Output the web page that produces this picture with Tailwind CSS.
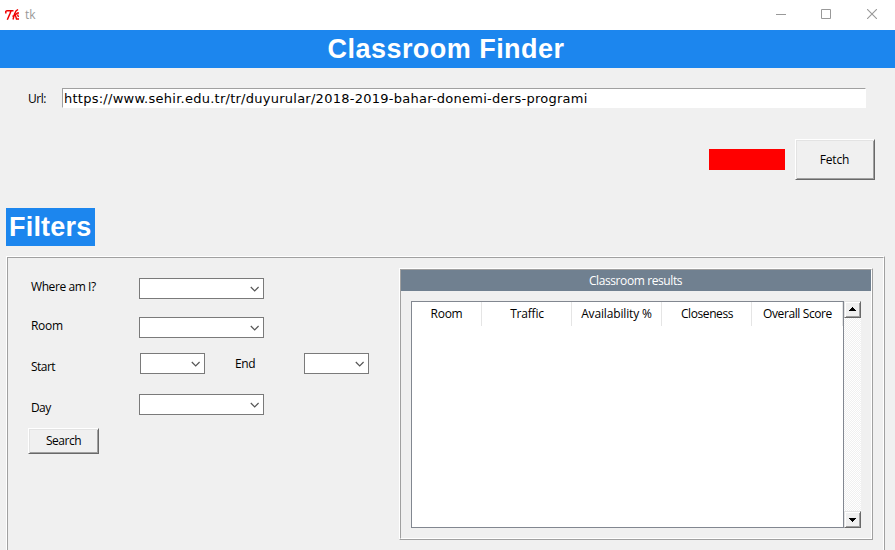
<!DOCTYPE html>
<html lang="en">
<head>
<meta charset="utf-8">
<title>tk</title>
<script src="https://cdn.jsdelivr.net/npm/@tailwindcss/browser@4"></script>
</head>
<body class="w-[895px] h-[550px] overflow-hidden bg-[#f0f0f0] font-['Open_Sans','Noto_Sans',sans-serif] text-[12px] leading-4 text-black whitespace-nowrap">
<div class="flex h-[550px] flex-col overflow-hidden">
  <header class="flex h-[30px] shrink-0 items-center bg-white text-[#999]">
    <svg class="ml-[5px] -mt-px" width="15" height="12" viewBox="0 0 15 12" fill="none" stroke="#f00000"><path d="M.8 4.500V2.500L2 1.700H8.500M6 2 4.800 5 3.500 8 2.300 10.800" stroke-width="1.500"/><path d="M13 .5 11 2 9.500 5 8 10.500M7.500 7.500 9.500 6.500 12.500 4H14M10.500 6.500 11.500 10H14M12.500 5.500 13.500 8" stroke-width="1.400"/></svg>
    <span class="ml-[5px]">tk</span>
    <div class="ml-auto mr-[18px] -mt-[2px] flex items-center">
      <svg class="mr-[35px]" width="10" height="10" viewBox="0 0 10 10" stroke="#999"><path d="M0 5.500h10"/></svg>
      <svg class="mr-9" width="10" height="10" viewBox="0 0 10 10" fill="none" stroke="#999"><path d="M.5.5h9v9h-9z"/></svg>
      <svg width="10" height="10" viewBox="0 0 10 10" stroke="#999" stroke-width="1.100"><path d="m0 0 10 10M10 0 0 10"/></svg>
    </div>
  </header>
  <h1 class="h-[38px] shrink-0 bg-[#1c86ee] pr-[3px] text-center font-['Liberation_Sans',Arial,sans-serif] text-[27px] leading-[38px] font-bold tracking-[0.46px] text-white">Classroom Finder</h1>

  <section class="flex h-[40px] shrink-0 pt-5">
    <label class="w-[62px] pl-[28px] pt-[3px] tracking-[-0.5px]">Url:</label>
    <div class="h-5 w-[804px] border border-t-[#a0a0a0] border-l-[#a0a0a0] border-r-white border-b-white bg-white pl-px font-['DejaVu_Sans',Verdana,sans-serif] text-[13px] leading-[19px] tracking-[0.255px]">https://www.sehir.edu.tr/tr/duyurular/2018-2019-bahar-donemi-ders-programi</div>
  </section>
  <section class="mt-[31px] mr-5 flex h-[41px] shrink-0 items-start justify-end gap-[10px]">
    <div class="mt-[10px] h-[21px] w-[76px] bg-[#ff0000]"></div>
    <button class="h-[41px] w-20 border border-t-white border-l-white border-r-[#696969] border-b-[#696969] pr-px tracking-[-0.2px] shadow-[inset_1px_1px_0_#e3e3e3,inset_-1px_-1px_0_#a0a0a0]">Fetch</button>
  </section>

  <h2 class="mt-7 ml-[6px] h-[38px] w-[89px] shrink-0 bg-[#1c86ee] pl-[3px] font-['Liberation_Sans',Arial,sans-serif] text-[27px] leading-[38px] font-bold tracking-[0.2px] text-white">Filters</h2>

  <main class="mt-[10px] ml-[6px] h-[310px] w-[879px] shrink-0 border border-t-white border-l-white border-r-[#a0a0a0] border-b-[#a0a0a0]">
    <div class="flex h-full border border-t-[#a0a0a0] border-l-[#a0a0a0] border-r-white border-b-white">
      <div class="w-[391px] shrink-0 pt-5">
        <div class="flex h-[39px]">
          <label class="w-[131px] pt-px pl-[23px] tracking-[-0.42px]">Where am I?</label>
          <div class="flex h-[21px] w-[125px] items-center justify-end border border-[#7a7a7a] bg-white pt-px pr-1"><svg width="9" height="6" viewBox="0 0 9 6" fill="none" stroke="#555" stroke-width="1.200"><path d="m.8 1 3.900 3.900L8.600 1"/></svg></div>
        </div>
        <div class="flex h-[36px]">
          <label class="w-[131px] pt-px pl-[23px] tracking-[-0.3px]">Room</label>
          <div class="flex h-[21px] w-[125px] items-center justify-end border border-[#7a7a7a] bg-white pt-px pr-1"><svg width="9" height="6" viewBox="0 0 9 6" fill="none" stroke="#555" stroke-width="1.200"><path d="m.8 1 3.900 3.900L8.600 1"/></svg></div>
        </div>
        <div class="flex h-[41px]">
          <label class="w-[132px] pt-[6px] pl-[23px] tracking-[-0.55px]">Start</label>
          <div class="flex h-[21px] w-[65px] items-center justify-end border border-[#7a7a7a] bg-white pt-px pr-1"><svg width="9" height="6" viewBox="0 0 9 6" fill="none" stroke="#555" stroke-width="1.200"><path d="m.8 1 3.900 3.900L8.600 1"/></svg></div>
          <label class="w-[99px] pt-[3px] pl-[30px] tracking-[-0.35px]">End</label>
          <div class="flex h-[21px] w-[65px] items-center justify-end border border-[#7a7a7a] bg-white pt-px pr-1"><svg width="9" height="6" viewBox="0 0 9 6" fill="none" stroke="#555" stroke-width="1.200"><path d="m.8 1 3.900 3.900L8.600 1"/></svg></div>
        </div>
        <div class="flex h-[34px]">
          <label class="w-[131px] pt-[6px] pl-[23px] tracking-[-0.6px]">Day</label>
          <div class="flex h-[21px] w-[125px] items-center justify-end border border-[#7a7a7a] bg-white pt-px pr-1"><svg width="9" height="6" viewBox="0 0 9 6" fill="none" stroke="#555" stroke-width="1.200"><path d="m.8 1 3.900 3.900L8.600 1"/></svg></div>
        </div>
        <button class="ml-5 block h-[26px] w-[71px] border border-t-white border-l-white border-r-[#696969] border-b-[#696969] leading-[24px] tracking-[-0.5px] shadow-[inset_1px_1px_0_#e3e3e3,inset_-1px_-1px_0_#a0a0a0]">Search</button>
      </div>

      <div class="mt-[10px] h-[272px] w-[474px] shrink-0 border border-t-white border-l-white border-r-[#a0a0a0] border-b-[#a0a0a0]">
        <div class="h-full border border-t-[#a0a0a0] border-l-[#a0a0a0] border-r-white border-b-white">
          <div class="h-[21px] bg-[#708090] pr-px text-center leading-[22px] tracking-[-0.4px] text-white">Classroom results</div>
          <div class="mt-[10px] ml-[10px] flex h-[227px]">
            <div class="w-[433px] border border-[#828790] bg-white">
              <div class="grid h-6 grid-cols-[70px_90px_90px_90px_91px] text-center leading-6">
                <div class="border-r border-[#e5e5e5] tracking-[-0.25px]">Room</div>
                <div class="border-r border-[#e5e5e5] pl-px tracking-[-0.2px]">Traffic</div>
                <div class="border-r border-[#e5e5e5] tracking-[-0.15px]">Availability %</div>
                <div class="border-r border-[#e5e5e5] pl-px tracking-[-0.4px]">Closeness</div>
                <div class="border-r border-[#e5e5e5] pl-px tracking-[-0.4px]">Overall Score</div>
              </div>
            </div>
            <div class="flex w-[17px] flex-col justify-between bg-[repeating-conic-gradient(#fff_0_25%,#f0f0f0_0_50%)] bg-[length:2px_2px]">
              <div class="grid h-[17px] place-items-center border border-t-[#e3e3e3] border-l-[#e3e3e3] border-r-[#696969] border-b-[#696969] bg-[#f0f0f0] pb-px shadow-[inset_1px_1px_0_#fff,inset_-1px_-1px_0_#a0a0a0]"><svg width="7" height="4" viewBox="0 0 7 4" shape-rendering="crispEdges"><path d="M3 0h1v1h1v1h1v1h1v1H0V3h1V2h1V1h1z"/></svg></div>
              <div class="grid h-[17px] place-items-center border border-t-[#e3e3e3] border-l-[#e3e3e3] border-r-[#696969] border-b-[#696969] bg-[#f0f0f0] shadow-[inset_1px_1px_0_#fff,inset_-1px_-1px_0_#a0a0a0]"><svg width="7" height="4" viewBox="0 0 7 4" shape-rendering="crispEdges"><path d="M0 0h7v1H6v1H5v1H4v1H3V3H2V2H1V1H0z"/></svg></div>
            </div>
          </div>
        </div>
      </div>
    </div>
  </main>
</div>
</body>
</html>
